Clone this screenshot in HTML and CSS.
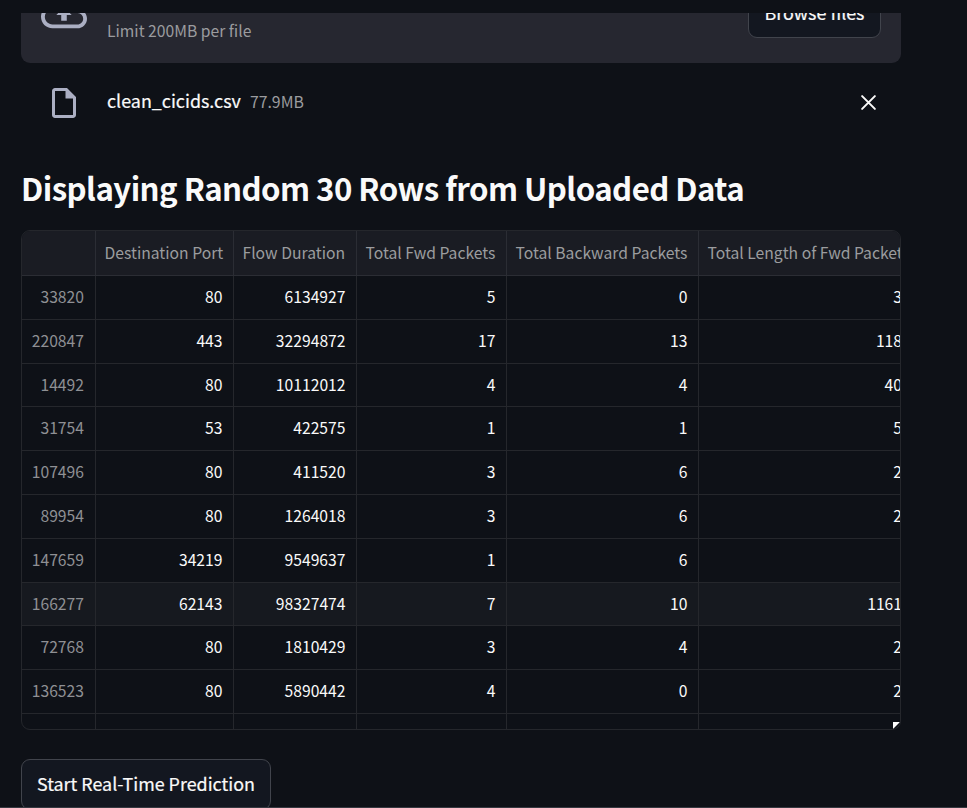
FILE: index.html
```
<!DOCTYPE html>
<html lang="en">
<head>
<meta charset="utf-8">
<title>Real-Time Prediction</title>
<link rel="stylesheet" href="styles.css">
</head>
<body>
<main class="page">
  <section class="uploader">
    <svg class="cloud" viewBox="0 0 24 24"><path d="M19.35 10.04A7.49 7.49 0 0 0 12 4C9.11 4 6.6 5.64 5.35 8.04A5.994 5.994 0 0 0 0 14c0 3.31 2.69 6 6 6h13c2.76 0 5-2.24 5-5 0-2.64-2.05-4.78-4.65-4.96zM19 18H6c-2.21 0-4-1.79-4-4 0-2.05 1.53-3.76 3.56-3.97l1.07-.11.5-.95A5.469 5.469 0 0 1 12 6c2.62 0 4.88 1.86 5.39 4.43l.3 1.5 1.53.11A2.98 2.98 0 0 1 22 15c0 1.65-1.35 3-3 3zM8 13h2.55v3h2.9v-3H16l-4-4-4 4z"/></svg>
    <span class="limit">Limit 200MB per file</span>
    <button class="button browse">Browse files</button>
  </section>
  <section class="file">
    <svg class="doc" viewBox="0 0 24 24"><path d="M14 2H6c-1.1 0-1.99.9-1.99 2L4 20c0 1.1.89 2 1.99 2H18c1.1 0 2-.9 2-2V8l-6-6zM6 20V4h7v5h5v11H6z"/></svg>
    <span class="name">clean_cicids.csv</span>
    <span class="size">77.9MB</span>
    <svg class="close" viewBox="0 0 16 16"><path d="M2 2l12 12M14 2L2 14"/></svg>
  </section>
  <h2 class="title"><span>Displaying Random 30 Rows from Uploaded Data</span></h2>
  <section class="table">
    <div class="row head"><span></span><span>Destination Port</span><span>Flow Duration</span><span>Total Fwd Packets</span><span>Total Backward Packets</span><span>Total Length of Fwd Packets</span></div>
    <div class="row"><span>33820</span><span>80</span><span>6134927</span><span>5</span><span>0</span><span>3</span></div>
    <div class="row"><span>220847</span><span>443</span><span>32294872</span><span>17</span><span>13</span><span>118</span></div>
    <div class="row"><span>14492</span><span>80</span><span>10112012</span><span>4</span><span>4</span><span>40</span></div>
    <div class="row"><span>31754</span><span>53</span><span>422575</span><span>1</span><span>1</span><span>5</span></div>
    <div class="row"><span>107496</span><span>80</span><span>411520</span><span>3</span><span>6</span><span>2</span></div>
    <div class="row"><span>89954</span><span>80</span><span>1264018</span><span>3</span><span>6</span><span>2</span></div>
    <div class="row"><span>147659</span><span>34219</span><span>9549637</span><span>1</span><span>6</span><span></span></div>
    <div class="row hover"><span>166277</span><span>62143</span><span>98327474</span><span>7</span><span>10</span><span>1161</span></div>
    <div class="row"><span>72768</span><span>80</span><span>1810429</span><span>3</span><span>4</span><span>2</span></div>
    <div class="row"><span>136523</span><span>80</span><span>5890442</span><span>4</span><span>0</span><span>2</span></div>
    <div class="row"><span></span><span></span><span></span><span></span><span></span><span></span></div>
    <i class="corner"></i>
  </section>
  <button class="button start">Start Real-Time Prediction</button>
</main>
<div class="edge"></div>
</body>
</html>
```
FILE: styles.css
```
* { box-sizing: border-box; }
body {
  margin: 0;
  height: 808px;
  overflow: hidden;
  position: relative;
  background: #0e1117;
  color: #fafafa;
  font-family: "Noto Sans CJK SC", "Open Sans", sans-serif;
  font-size: 15.7px;
}
.page { width: 880px; margin-left: 21px; padding-top: 13px; }
.uploader {
  display: flex;
  align-items: flex-start;
  height: 50px;
  padding: 0 20px;
  overflow: hidden;
  background: #262730;
  border-radius: 0 0 9px 9px;
}
.cloud { width: 46px; height: 46px; margin-top: -23px; fill: #abafc3; }
.limit { margin: 6px 0 0 20px; line-height: 24px; color: #9b9c9f; font-size: 15.7px; }
.button {
  display: flex;
  align-items: center;
  justify-content: center;
  padding: 0 0 3px;
  background: #131720;
  border: 1px solid #41444c;
  border-radius: 9px;
  color: #fafafa;
  font-family: inherit;
  font-size: 17.9px;
  white-space: nowrap;
  -webkit-text-stroke: 0.2px #fafafa;
}
.browse { width: 133px; height: 50px; margin: -25px 0 0 auto; }
.file { display: flex; align-items: center; height: 78px; padding: 0 24px 0 25px; }
.doc { width: 36px; height: 36px; margin-top: 2px; fill: #abafc3; }
.name { margin: -4px 0 0 25px; font-size: 17.9px; -webkit-text-stroke: 0.2px #fafafa; }
.size { margin: -2px 0 0 9px; font-size: 15.8px; color: #9b9c9f; }
.close {
  width: 17px;
  height: 17px;
  margin: 1px 0 0 auto;
  fill: none;
  stroke: #fafafa;
  stroke-width: 1.9;
  stroke-linecap: round;
}
.title {
  height: 89px;
  margin: 0;
  padding-top: 24px;
  font-size: 31.2px;
  line-height: 46px;
  font-weight: 600;
  letter-spacing: -0.54px;
  white-space: nowrap;
}
.table {
  position: relative;
  height: 500px;
  border: 1px solid #25272c;
  border-radius: 9px;
  overflow: hidden;
}
.row {
  display: grid;
  grid-template-columns: 74px 138px 123px 150px 192px 205px;
  height: 43.8px;
  line-height: 42.6px;
}
.row span {
  padding-right: 10.5px;
  text-align: right;
  white-space: nowrap;
  border-right: 1px solid #25272c;
  border-bottom: 1px solid #25272c;
}
.row span:first-child { padding-right: 11px; color: #8f9094; }
.row span:last-child { padding-right: 1px; }
.row.head { height: 45px; background: #1a1c23; line-height: 44px; }
.row.head span { padding: 0 0 0 8.5px; text-align: left; color: #9b9c9f; border-color: #2b2d34; }
.row.hover { background: #16191f; }
.corner {
  position: absolute;
  right: 0;
  bottom: 0;
  width: 7px;
  height: 7px;
  background: #fff;
  clip-path: polygon(0 0, 100% 0, 0 100%);
}
.start { width: 250px; height: 51px; margin-top: 29px; }
.edge { position: absolute; left: 0; right: 0; bottom: 0; height: 1px; background: #363941; }
```
